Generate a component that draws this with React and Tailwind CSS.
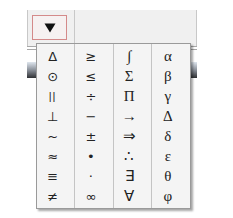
import React from 'react'

const columns = [
  { font: 'sans', items: ['Δ', '⊙', '||', '⊥', '~', '≈', '≡', '≠'] },
  { font: 'sans', items: ['≥', '≤', '÷', '−', '±', '•', '·', '∞'] },
  { font: 'serif', items: ['∫', 'Σ', 'Π', '→', '⇒', '∴', '∃', '∀'] },
  { font: 'serif', items: ['α', 'β', 'γ', 'Δ', 'δ', 'ε', 'θ', 'φ'] },
]

const SymbolColumn = ({ col, last }) => (
  <div className={`flex flex-col pt-[2px] ${last ? '' : 'border-r border-[#c4c4c4]'}`}>
    {col.items.map((s, i) => (
      <div
        key={i}
        className={`h-[20px] flex items-center justify-center pr-[6px] text-[#222] leading-none ${
          s === '||'
            ? "font-['Liberation_Sans',sans-serif] text-[11px] tracking-[1px]"
            : col.font === 'serif'
            ? "font-['Liberation_Serif',serif] text-[15px]"
            : "font-['DejaVu_Sans',sans-serif] text-[13px]"
        }`}
      >
        {s}
      </div>
    ))}
  </div>
)

const App = () => {
  return (
    <div className="relative w-[233px] h-[218px] bg-white overflow-hidden">
      <div className="pt-[10px] pl-[27px]">
        {/* Toolbar */}
        <div className="w-[170px] h-[36px] bg-[#f0f0f0] border-l border-r border-[#c8c8c8] flex items-start">
          <div className="ml-[4px] mt-[5px] w-[35px] h-[25px] border border-[#d48a8a] bg-[#f6f1f1] flex items-center justify-center">
            <svg width="12" height="10" viewBox="0 0 12 10">
              <path d="M0.5 0.5 L11.5 0.5 L6 9.5 Z" fill="#111" />
            </svg>
          </div>
          <div className="ml-[7px] w-px h-full bg-[#c8c8c8]" />
        </div>
        <div className="w-[170px] h-[4px] border-t border-b border-[#a8a8a8]" />
        <div className="w-[170px] h-[12px] bg-white" />
        {/* header band behind the menu */}
        <div className="w-[170px] h-[16px] bg-[linear-gradient(to_bottom,#dfe6ee,#8a9099,#2e3033)]" />
      </div>

      {/* Dropdown menu */}
      <div className="absolute left-[36px] top-[43px] w-[155px] h-[166px] bg-[#f4f4f4] border border-[#9a9a9a] shadow-[2px_2px_2px_rgba(0,0,0,0.35)] grid grid-cols-4">
        {columns.map((col, i) => (
          <SymbolColumn key={i} col={col} last={i === columns.length - 1} />
        ))}
      </div>
    </div>
  )
}

export default App
